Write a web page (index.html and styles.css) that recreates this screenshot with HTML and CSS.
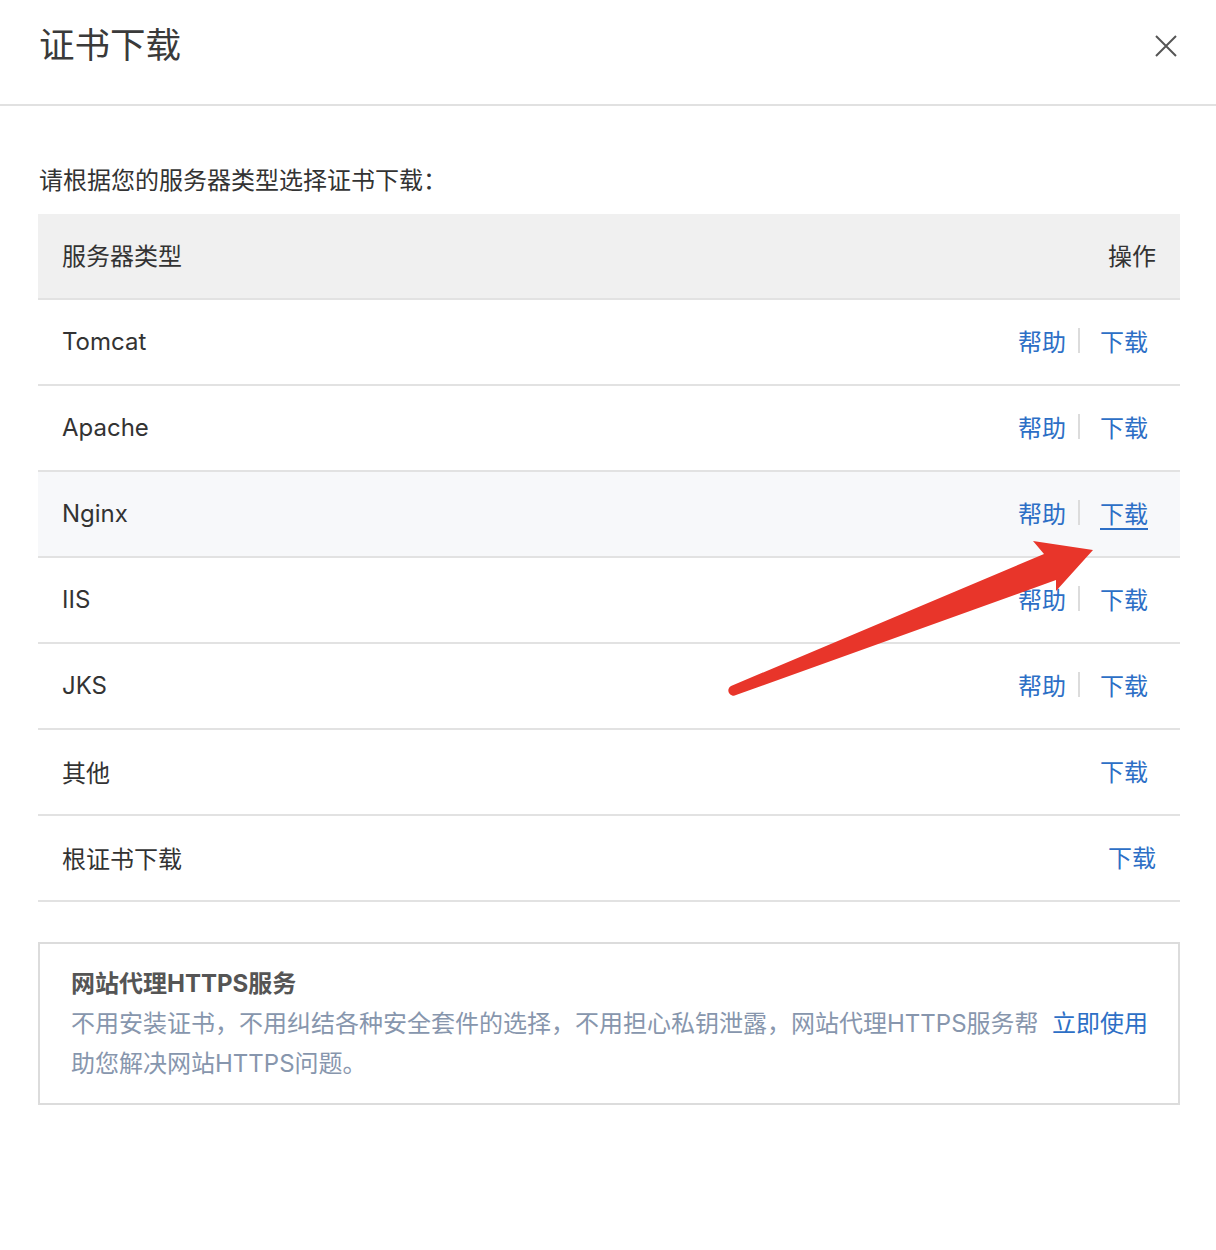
FILE: index.html
```html
<!DOCTYPE html>
<html lang="zh-CN">
<head>
    <meta charset="UTF-8">
    <meta name="viewport" content="width=device-width, initial-scale=1.0">
    <title>证书下载</title>
    <link rel="stylesheet" href="styles.css">
</head>
<body>
    <!-- Dialog header -->
    <div class="dialog-header">
        <div class="dialog-title">证书下载</div>
        <button class="dialog-close" aria-label="close">
            <svg width="22" height="22" viewBox="0 0 22 22">
                <path d="M1 1 L21 21 M21 1 L1 21" stroke="#555" stroke-width="2" fill="none"/>
            </svg>
        </button>
    </div>

    <div class="dialog-body">
        <p class="intro">请根据您的服务器类型选择证书下载：</p>

        <div class="cert-table">
            <div class="cert-row cert-head">
                <span>服务器类型</span>
                <span>操作</span>
            </div>
            <div class="cert-row">
                <span>Tomcat</span>
                <span class="actions"><a class="link">帮助</a><i class="sep"></i><a class="link dl">下载</a></span>
            </div>
            <div class="cert-row">
                <span>Apache</span>
                <span class="actions"><a class="link">帮助</a><i class="sep"></i><a class="link dl">下载</a></span>
            </div>
            <div class="cert-row hover">
                <span>Nginx</span>
                <span class="actions"><a class="link">帮助</a><i class="sep"></i><a class="link dl active">下载</a></span>
            </div>
            <div class="cert-row">
                <span>IIS</span>
                <span class="actions"><a class="link">帮助</a><i class="sep"></i><a class="link dl">下载</a></span>
            </div>
            <div class="cert-row">
                <span>JKS</span>
                <span class="actions"><a class="link">帮助</a><i class="sep"></i><a class="link dl">下载</a></span>
            </div>
            <div class="cert-row">
                <span>其他</span>
                <span class="actions"><a class="link dl">下载</a></span>
            </div>
            <div class="cert-row">
                <span>根证书下载</span>
                <span class="actions"><a class="link">下载</a></span>
            </div>
        </div>

        <!-- Promo box -->
        <div class="promo">
            <div class="promo-title">网站代理HTTPS服务</div>
            <div class="promo-main">
                <p class="promo-desc">不用安装证书，不用纠结各种安全套件的选择，不用担心私钥泄露，网站代理HTTPS服务帮助您解决网站HTTPS问题。</p>
                <a class="link promo-link">立即使用</a>
            </div>
        </div>
    </div>

    <!-- Annotation arrow -->
    <svg class="arrow" width="1216" height="1250" viewBox="0 0 1216 1250">
        <path d="M731 686 L1044 554 L1033 541 L1093 550 L1056 591 L1056 580 L736 695 A5 5 0 0 1 731 686 Z" fill="#e8352a"/>
    </svg>
</body>
</html>
```

FILE: styles.css
```css
* {
    margin: 0;
    padding: 0;
    box-sizing: border-box;
}

body {
    font-family: Inter, "Noto Sans CJK SC", sans-serif;
    background: #fff;
    color: #333;
    width: 1216px;
    min-height: 1250px;
    position: relative;
}

.dialog-header {
    height: 106px;
    border-bottom: 2px solid #e1e1e1;
    display: flex;
    align-items: center;
    justify-content: space-between;
    padding: 0 39px 12px 39px;
}

.dialog-title {
    font-size: 35.5px;
    color: #3a3a3a;
    line-height: 48px;
}

.dialog-close {
    background: none;
    border: none;
    width: 22px;
    height: 22px;
    display: flex;
    cursor: pointer;
}

.dialog-body {
    padding: 0 36px 0 38px;
}

.intro {
    font-size: 24px;
    line-height: 34px;
    margin-top: 58px;
    margin-bottom: 16px;
    padding-left: 1px;
}

.cert-row {
    display: flex;
    justify-content: space-between;
    align-items: center;
    height: 86px;
    padding: 0 24px 2px 24px;
    border-bottom: 2px solid #e2e2e2;
    font-size: 24px;
}

.cert-head {
    background: #f0f0f0;
    padding-bottom: 4px;
}

.cert-row.hover {
    background: #f7f8fa;
}

.actions {
    display: flex;
    align-items: center;
    margin-bottom: 2px;
}

.link {
    color: #2d6fc6;
    cursor: pointer;
    text-decoration: none;
}

.link.dl {
    margin: 0 8px;
}

.link.active {
    text-decoration: underline;
    text-underline-offset: 5px;
}

.sep {
    display: inline-block;
    width: 2px;
    height: 25px;
    background: #dcdcdc;
    margin: 0 12px;
}

.promo {
    margin-top: 40px;
    border: 2px solid #dcdcdc;
    padding: 24px 30px 19px 31px;
}

.promo-title {
    font-size: 24px;
    font-weight: 700;
    color: #555;
    line-height: 32px;
    margin-bottom: 4px;
}

.promo-main {
    display: flex;
    align-items: flex-start;
}

.promo-desc {
    width: 975px;
    font-size: 24px;
    line-height: 40px;
    color: #8796ad;
}

.promo-link {
    margin-left: auto;
    font-size: 24px;
    line-height: 40px;
    white-space: nowrap;
}

.arrow {
    position: absolute;
    top: 0;
    left: 0;
    pointer-events: none;
}
```
